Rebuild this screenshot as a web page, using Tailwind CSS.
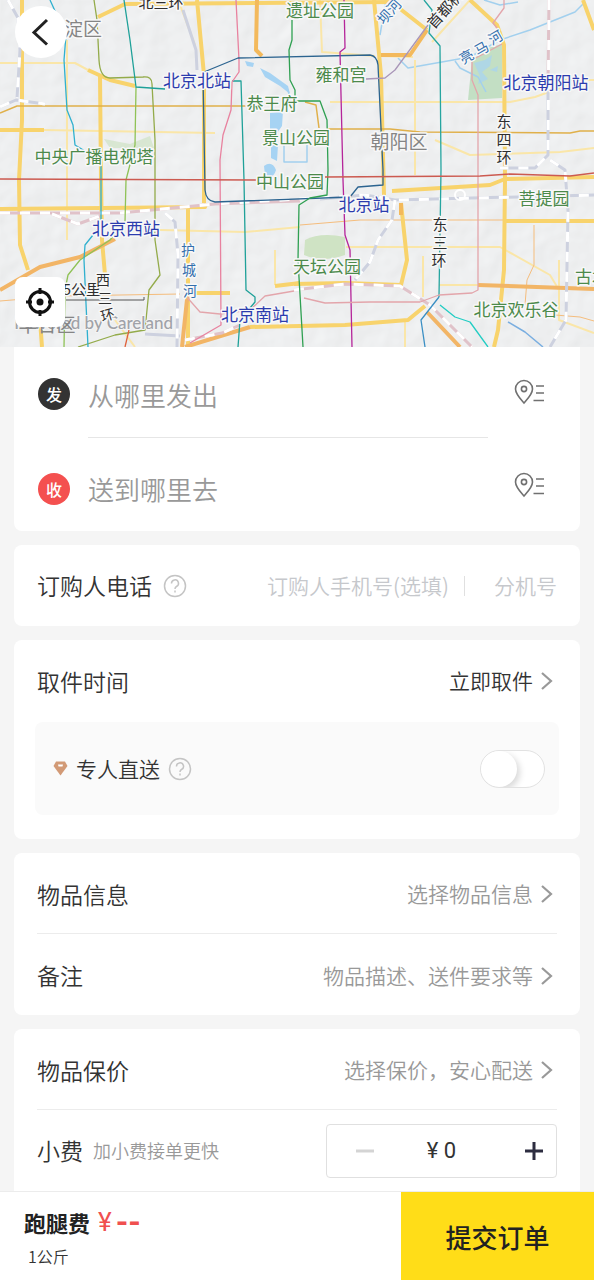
<!DOCTYPE html>
<html lang="zh-CN">
<head>
    <meta charset="UTF-8">
    <meta name="viewport" content="width=device-width, initial-scale=1.0">
    <title>跑腿下单</title>
    <script src="https://cdn.jsdelivr.net/npm/@tailwindcss/browser@4"></script>
</head>
<body class="h-screen flex flex-col bg-[#f5f5f5] text-[#333333] font-[350] font-['Noto_Sans_CJK_SC',sans-serif]">
    <main class="flex-1 min-h-0 overflow-hidden">
        <!-- Carte -->
        <section class="relative h-[347px] overflow-hidden bg-[#e9eaeb]">
            <svg class="w-full h-full" viewBox="0 0 594 347" preserveAspectRatio="xMidYMid slice" fill="none" stroke-linejoin="round">
                <defs>
                    <filter id="relief" x="0" y="0" width="100%" height="100%">
                        <feTurbulence type="fractalNoise" baseFrequency="0.05" numOctaves="2" seed="4" />
                        <feDiffuseLighting surfaceScale="1.2" diffuseConstant="1" lighting-color="#f8f9fa">
                            <feDistantLight azimuth="225" elevation="68" />
                        </feDiffuseLighting>
                    </filter>
                </defs>
                <rect width="594" height="347" fill="#ebeced" />
                <rect width="594" height="347" filter="url(#relief)" opacity="0.7" />

                <!-- parcs -->
                <g fill="#cfe3c4">
                    <path d="M468 100L472 60L488 48L502 44V98Z" fill="#c3dfc4" />
                    <path d="M305 240Q320 232 345 237V255Q322 263 304 255Z" />
                    <path d="M104 139L130 144L150 136L154 148L110 148Z" opacity=".7" />
                </g>
                <!-- eau -->
                <g fill="#a6d3f3">
                    <path d="M245 61L254 63L253 67L247 66ZM260 68L270 73L288 86L290 94L280 86L265 77Z" />
                    <path d="M270 113L283 111L282 126L275 136L270 130ZM271 138L278 145L277 161L271 158ZM264 166Q272 160 276 170Q273 180 265 175Z" />
                    <path d="M474 63L485 60L492 55L490 66L482 72L488 79L478 84L480 76ZM490 70L498 66L497 72Z" opacity=".7" />
                </g>
                <g stroke="#a2d0ee" stroke-width="1.5">
                    <path d="M386 0L380 35M398 58L408 68L470 57L500 40L530 30L575 12L583 4M455 61L460 68L478 77L486 92M484 0L500 5L518 2" />
                    <path d="M284 145V162H307V145M288 90L293 110" />
                    <path d="M508 322L525 332L543 347" stroke="#7aaee0" />
                </g>

                <!-- petites routes -->
                <g stroke="#fae6a8" stroke-width="2">
                    <path d="M0 63H75L88 70M44 130L215 133M67 40V240M320 0L322 52L375 56M415 60V175M381 56L413 57" />
                    <path d="M330 102H510L535 97L560 88M594 80H550M435 140L470 155L560 152L594 148M432 42L470 0M346 247H500L550 275L559 290" />
                    <path d="M160 230L245 232L300 227M275 250V285M405 320V347M423 256V297M439 285H478M559 260V320L594 333" />
                    <path d="M115 320L135 347M180 5L195 45" />
                </g>
                <path d="M300 225L360 220H505M0 301L60 296L180 294M534 225V265L527 280L525 305M555 315L580 317L594 321" stroke="#f5bd7d" stroke-width="1" />
                <!-- grandes routes -->
                <g stroke="#f8d36c" stroke-width="4">
                    <path d="M22 0L22 120L19 180L20 245L28 270M40 320L42 347M0 130H44M100 75L101 180L102 240L105 275" />
                    <path d="M98 17L125 4L394 2M197 0L204 75V203M0 209L205 207L206 203M188 208V347M188 293H230M250 327L345 325L408 320L425 306" />
                    <path d="M374 0L381 75L384 195M399 8L427 30M470 0L497 25L504 45L505 180L504 270L498 330L494 347" />
                    <path d="M392 191L490 185L505 179L594 177M505 221H594M401 203L407 260L401 285L345 283L294 284M583 0L594 30M275 286L300 283" />
                    <path d="M88 70L110 80L135 86" />
                </g>
                <path d="M257 0L256 50L262 56M427 30L410 55H381M401 203V215" stroke="#f3b95c" stroke-width="4" />
                <path d="M0 290L40 267L80 257L115 239M427 312L460 347M478 285L594 289M188 290L182 347M250 327L185 347" stroke="#f2b566" stroke-width="4" />
                <path d="M0 113L17 106H247M305 102L316 105L319 128M327 129H390L420 132L570 133L580 131H594" stroke="#e0b04a" stroke-width="1.5" />

                <!-- voies ferrées -->
                <g stroke-width="3">
                    <g stroke="#cdd1df">
                        <path d="M8 0L18 18L20 50L17 98M0 107L16 100L45 104M165 213L175 222L178 255L177 347M548 80V155L535 168H500M550 160L565 170L568 210L566 320L550 347" />
                        <path d="M320 199L365 195L395 200L594 195M395 200L392 220L378 240L370 262L355 280M145 334L180 336M183 10L196 50L197 70" />
                    </g>
                    <g stroke="#e0c2c9">
                        <path d="M549 0L548 80M0 213H120L215 204L300 201M52 214L78 224L100 216M185 340L222 333L240 325M294 290L345 284L400 286L430 305L472 347" />
                    </g>
                    <g stroke="#ffffff" stroke-dasharray="10 10">
                        <path d="M8 0L18 18L20 50L17 98M0 107L16 100L45 104M165 213L175 222L178 255L177 347M549 0L548 155L535 168H500M550 160L565 170L568 210L566 320L550 347" />
                        <path d="M0 213H120L215 204L365 195L395 200L594 195M395 200L392 220L378 240L370 262L355 280M52 214L78 224L100 216M185 340L222 333L240 325M294 290L345 284L400 286L430 305L472 347" />
                    </g>
                    <circle cx="460" cy="195" r="5" stroke="#ffffff" stroke-width="2" />
                </g>

                <!-- métro -->
                <g stroke-width="1.3">
                    <path d="M94 0L97 20L99 60Q100 78 110 78L143 77Q152 76 152 84L155 140V240L160 275L149 290L145 330L115 335L78 347" stroke="#93ab4a" />
                    <path d="M136 87L135 145L126 180L125 222L110 240L80 260L68 275L65 290L64 347" stroke="#8fc256" />
                    <path d="M50 0L66 35L64 60L67 110L73 125L75 145L85 151M101 150V225L85 245L84 260L88 347" stroke="#2fb0cf" />
                    <path d="M124 0L130 40L136 87L165 89M232 81H241L244 180L246 290L255 297V302L240 320L238 347" stroke="#1fa199" />
                    <path d="M236 0L239 60V72L232 82L231 110L223 135L220 160L221 325L190 343" stroke="#e8829f" />
                    <path d="M204 72L238 58L370 55Q377 56 378 65L383 170V185L358 187L350 197L215 202Q206 201 205 190L203 75" stroke="#2c6490" />
                    <path d="M292 20V40L289 50L290 80L295 90V101H320L327 120L328 170L327 195L310 198L299 205L298 260L303 347" stroke="#2fa052" />
                    <path d="M344 0L345 48L340 52L343 180L345 235L350 250L352 347" stroke="#b5259a" />
                    <path d="M424 0L432 10L429 33L440 46L441 170L439 297" stroke="#26a5a0" />
                    <path d="M439 297L421 320L425 347" stroke="#3a8fc4" />
                    <path d="M440 305L455 317L470 322L488 347" stroke="#22cdc4" />
                    <path d="M428 25L395 70L385 78L366 79" stroke="#a996b8" />
                    <path d="M504 0V8L493 23L500 32M502 44L472 60V80L478 95V290L472 293L439 295L420 302H370L325 303L304 298M185 295L200 312L220 314L250 310L265 296L294 291" stroke="#e3a5ab" />
                    <path d="M0 179L256 180M325 177L480 176L510 174L570 176L594 173" stroke="#cc5a50" stroke-width="1.6" />
                    <path d="M129 330L125 347" stroke="#e0603a" />
                </g>
                <path d="M66 300H144V297" stroke="#555555" />

                <!-- noms de lieux -->
                <text class="font-['Lato','Open_Sans',sans-serif]" x="173" y="329" font-size="17" font-weight="500" fill="#a0a2a8" stroke="#f5f5f5" stroke-width="2" paint-order="stroke" text-anchor="end">Powered by Careland</text>
                <g class="font-['Noto_Sans_CJK_SC',sans-serif]" font-size="17" font-weight="400" stroke="#f8f8f8" stroke-width="3" paint-order="stroke" text-anchor="middle">
                    <g fill="#4c8a4b">
                        <text x="320" y="17">遗址公园</text>
                        <text x="341" y="81">雍和宫</text>
                        <text x="272" y="110">恭王府</text>
                        <text x="296" y="144">景山公园</text>
                        <text x="94" y="163">中央广播电视塔</text>
                        <text x="290" y="188">中山公园</text>
                        <text x="544" y="205">菩提园</text>
                        <text x="327" y="273">天坛公园</text>
                        <text x="516" y="316">北京欢乐谷</text>
                        <text x="575" y="283" text-anchor="start">古北</text>
                    </g>
                    <g fill="#2c3cae">
                        <text x="197" y="87">北京北站</text>
                        <text x="546" y="89">北京朝阳站</text>
                        <text x="364" y="211">北京站</text>
                        <text x="126" y="235">北京西站</text>
                        <text x="255" y="321">北京南站</text>
                    </g>
                    <g fill="#858585" font-size="19">
                        <text x="83" y="36">淀区</text>
                        <text x="399" y="149">朝阳区</text>
                        <text x="47" y="332" stroke="none">丰台区</text>
                    </g>
                    <g fill="#336fae" font-size="14">
                        <text x="188" y="255">护</text>
                        <text x="189" y="275">城</text>
                        <text x="190" y="296">河</text>
                        <text transform="translate(393 15) rotate(-48)">坝河</text>
                        <text transform="translate(469 61) rotate(-30)">亮</text>
                        <text transform="translate(484 53) rotate(-30)">马</text>
                        <text transform="translate(498 42) rotate(-30)">河</text>
                    </g>
                    <g fill="#2e2e2e" font-size="15">
                        <text x="161" y="8">北三环</text>
                        <text x="504" y="127">东</text>
                        <text x="504" y="145">四</text>
                        <text x="504" y="163">环</text>
                        <text x="440" y="230">东</text>
                        <text x="440" y="248">三</text>
                        <text x="439" y="266">环</text>
                        <text x="101" y="295" text-anchor="end">5公里</text>
                        <g font-size="14">
                            <text x="103" y="285">西</text>
                            <text x="105" y="303">三</text>
                            <text transform="translate(109 320) rotate(-15)">环</text>
                        </g>
                        <text transform="translate(449 13) rotate(-48)">首都机</text>
                    </g>
                </g>
            </svg>

            <button type="button" aria-label="返回" class="absolute left-[15px] top-[6px] size-[52px] rounded-full bg-white flex items-center justify-center">
                <svg width="52" height="52" viewBox="0 0 52 52" fill="none" stroke="#222222" stroke-width="3">
                    <path d="M32 14L19 26.500L32 38.500" />
                </svg>
            </button>
            <button type="button" aria-label="定位" class="absolute left-[15px] top-[277px] size-[50px] rounded-lg bg-white flex items-center justify-center">
                <svg width="30" height="30" viewBox="0 0 30 30" fill="none" stroke="#111111" stroke-width="3">
                    <circle cx="15" cy="15" r="10.500" />
                    <circle cx="15" cy="15" r="3.500" fill="#111111" stroke="none" />
                    <path d="M15 1V7M15 23V29M1 15H7M23 15H29" />
                </svg>
            </button>
        </section>

        <div class="px-[14px] space-y-[14px]">
            <!-- Adresses -->
            <section class="bg-white rounded-b-lg pl-6 pr-[34px]">
                <div class="flex items-center h-[90px] pt-1">
                    <label for="from" class="size-8 rounded-full bg-[#333333] text-white text-[16px] font-medium flex items-center justify-center">发</label>
                    <input id="from" type="text" placeholder="从哪里发出" class="ml-[18px] flex-1 min-w-0 text-[26px] outline-none placeholder:text-[#999999]">
                    <button type="button" aria-label="寄件地址簿" class="pb-1">
                        <svg width="32" height="26" viewBox="0 0 32 26" fill="none" stroke="#707070" stroke-width="1.600">
                            <path d="M10 24C6 19.500 1.500 15 1.500 10A8.500 8.500 0 0 1 18.500 10C18.500 15 14 19.500 10 24Z" />
                            <circle cx="10" cy="10" r="2.600" />
                            <path d="M22 7H30M22 14H30M19.500 21.500H30" />
                        </svg>
                    </button>
                </div>
                <hr class="ml-[50px] mr-[58px] border-[#e6e6e6]">
                <div class="flex items-center h-[93px] pt-2">
                    <label for="to" class="size-8 rounded-full bg-[#f4504f] text-white text-[16px] font-medium flex items-center justify-center">收</label>
                    <input id="to" type="text" placeholder="送到哪里去" class="ml-[18px] flex-1 min-w-0 text-[26px] outline-none placeholder:text-[#999999]">
                    <button type="button" aria-label="收件地址簿" class="pb-2">
                        <svg width="32" height="26" viewBox="0 0 32 26" fill="none" stroke="#707070" stroke-width="1.600">
                            <path d="M10 24C6 19.500 1.500 15 1.500 10A8.500 8.500 0 0 1 18.500 10C18.500 15 14 19.500 10 24Z" />
                            <circle cx="10" cy="10" r="2.600" />
                            <path d="M22 7H30M22 14H30M19.500 21.500H30" />
                        </svg>
                    </button>
                </div>
            </section>

            <!-- Téléphone -->
            <section class="bg-white rounded-lg px-[23px] h-[81px] flex items-center">
                <label for="phone" class="text-[23px]">订购人电话</label>
                <button type="button" aria-label="电话说明" class="ml-[11px]">
                    <svg width="24" height="24" viewBox="0 0 24 24" fill="none" stroke="#c4c4c4" stroke-width="1.500">
                        <circle cx="12" cy="12" r="10.500" />
                        <path d="M8.500 9.500A3.500 3.500 0 1 1 13.500 12.500Q12 13.300 12 15" />
                        <path d="M12 16.500V18.500" />
                    </svg>
                </button>
                <input id="phone" type="tel" placeholder="订购人手机号(选填)" class="ml-auto w-[185px] text-[21px] outline-none placeholder:text-[#c6c8cc]">
                <span class="ml-3 w-px h-5 bg-[#e0e0e0]"></span>
                <input type="tel" aria-label="分机号" placeholder="分机号" class="ml-[29px] w-[63px] text-[21px] outline-none placeholder:text-[#c6c8cc]">
            </section>

            <!-- Heure de retrait -->
            <section class="bg-white rounded-lg pb-6">
                <button type="button" class="w-full h-[82px] px-[23px] flex items-center justify-between">
                    <span class="text-[23px]">取件时间</span>
                    <span class="flex items-center gap-1 text-[21px]">立即取件
                        <svg width="20" height="20" viewBox="0 0 20 20" fill="none" stroke="#999999" stroke-width="2.200"><path d="M5 2L14 10L5 18" /></svg>
                    </span>
                </button>
                <div class="mx-[21px] h-[93px] rounded-lg bg-[#fafafa] pl-[18px] pr-[14px] flex items-center">
                    <svg width="15" height="15" viewBox="0 0 15 15">
                        <path d="M3 0.500H12L14.500 5L7.500 14.500L0.500 5Z" fill="#d29a76" />
                        <path d="M5 3.500H10L9.500 5.500H5.500Z" fill="#ffffff" />
                    </svg>
                    <label for="direct" class="ml-2 text-[21px]">专人直送</label>
                    <button type="button" aria-label="专人直送说明" class="ml-2">
                        <svg width="24" height="24" viewBox="0 0 24 24" fill="none" stroke="#c4c4c4" stroke-width="1.500">
                            <circle cx="12" cy="12" r="10.500" />
                            <path d="M8.500 9.500A3.500 3.500 0 1 1 13.500 12.500Q12 13.300 12 15" />
                            <path d="M12 16.500V18.500" />
                        </svg>
                    </button>
                    <input id="direct" type="checkbox" role="switch" class="ml-auto appearance-none w-[65px] h-[38px] rounded-full border border-[#e2e2e2] bg-white checked:bg-[#ffdd18] before:block before:size-[36px] before:rounded-full before:bg-white before:shadow-[3px_3px_6px_rgba(0,0,0,0.15)] checked:before:ml-auto overflow-hidden">
                </div>
            </section>

            <!-- Article -->
            <section class="bg-white rounded-lg px-[23px]">
                <button type="button" class="w-full h-[80px] pt-[2px] flex items-center justify-between">
                    <span class="text-[23px]">物品信息</span>
                    <span class="flex items-center gap-1 text-[21px] text-[#999999]">选择物品信息
                        <svg width="20" height="20" viewBox="0 0 20 20" fill="none" stroke="#999999" stroke-width="2.200"><path d="M5 2L14 10L5 18" /></svg>
                    </span>
                </button>
                <hr class="border-[#ececec]">
                <button type="button" class="w-full h-[81px] pt-[2px] flex items-center justify-between">
                    <span class="text-[23px]">备注</span>
                    <span class="flex items-center gap-1 text-[21px] text-[#999999]">物品描述、送件要求等
                        <svg width="20" height="20" viewBox="0 0 20 20" fill="none" stroke="#999999" stroke-width="2.200"><path d="M5 2L14 10L5 18" /></svg>
                    </span>
                </button>
            </section>

            <!-- Assurance et pourboire -->
            <section class="bg-white rounded-lg px-[23px]">
                <button type="button" class="w-full h-[80px] pt-[2px] flex items-center justify-between">
                    <span class="text-[23px]">物品保价</span>
                    <span class="flex items-center gap-1 text-[21px] text-[#999999]">选择保价，安心配送
                        <svg width="20" height="20" viewBox="0 0 20 20" fill="none" stroke="#999999" stroke-width="2.200"><path d="M5 2L14 10L5 18" /></svg>
                    </span>
                </button>
                <hr class="border-[#ececec]">
                <div class="h-[81px] flex items-center">
                    <span class="text-[23px]">小费</span>
                    <span class="ml-[10px] text-[18px] text-[#999999]">加小费接单更快</span>
                    <div class="ml-auto w-[231px] h-[54px] border border-[#e0e0e0] rounded-sm grid grid-cols-3 items-center">
                        <button type="button" aria-label="减少" class="justify-self-center">
                            <svg width="20" height="20" viewBox="0 0 20 20" stroke="#d4d4d4" stroke-width="3"><path d="M1 10H19" /></svg>
                        </button>
                        <output class="justify-self-center text-[22px] font-normal font-['Roboto',sans-serif]">¥ 0</output>
                        <button type="button" aria-label="增加" class="justify-self-end pr-3">
                            <svg width="20" height="20" viewBox="0 0 20 20" stroke="#2d2d40" stroke-width="3"><path d="M1 10H19M10 1V19" /></svg>
                        </button>
                    </div>
                </div>
                <hr class="border-[#ececec]">
                <div class="h-[81px]"></div>
            </section>
        </div>
    </main>

    <!-- Footer -->
    <footer class="h-[89px] shrink-0 bg-white border-t border-[#ececec] flex">
        <div class="flex-1 pl-6 pt-[14px]">
            <p class="flex items-center gap-2 leading-8">
                <span class="text-[22px] font-bold text-[#222222]">跑腿费</span>
                <span class="flex items-center gap-1 text-[#f0504f] font-['Roboto',sans-serif]">
                    <span class="text-[26px] font-normal">¥</span>
                    <span class="text-[32px] font-bold">--</span>
                </span>
            </p>
            <p class="pl-1 pt-[6px] text-[16px] leading-6">1公斤</p>
        </div>
        <button type="submit" class="w-[193px] bg-[#ffdd18] text-[26px] font-medium text-[#222222]">提交订单</button>
    </footer>
</body>
</html>
